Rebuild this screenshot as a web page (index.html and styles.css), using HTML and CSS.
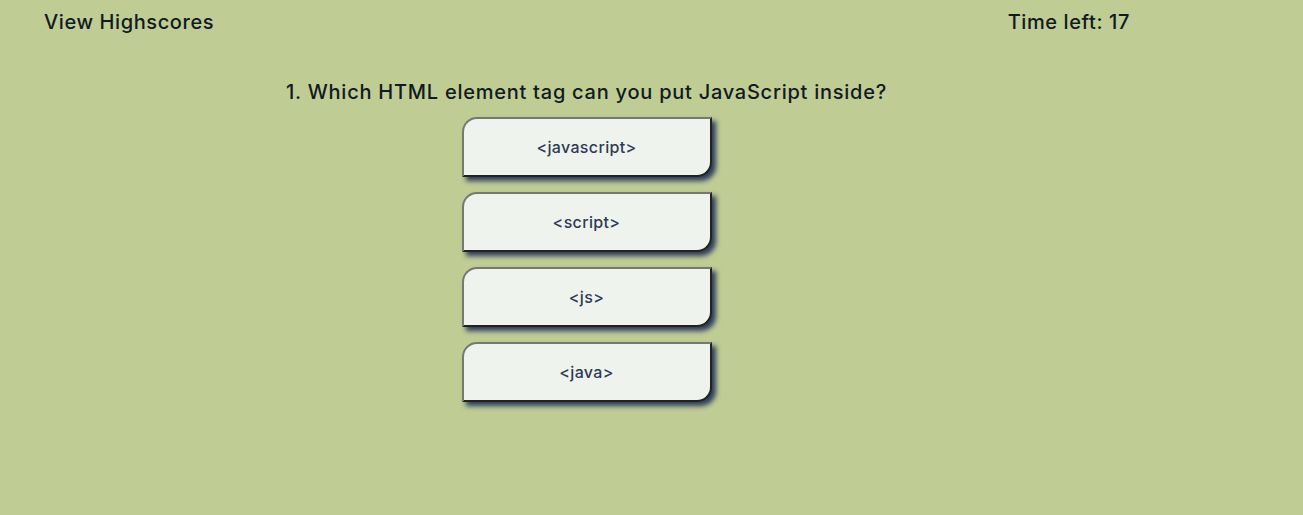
FILE: index.html
```html
<!DOCTYPE html>
<html>
<head>
<meta charset="utf-8">
<link rel="stylesheet" href="styles.css">
</head>
<body>
<header class="top">
  <a class="highscores">View Highscores</a>
  <div class="timer">Time left: 17</div>
</header>
<main class="quiz">
  <h2 class="question">1. Which HTML element tag can you put JavaScript inside?</h2>
  <div class="choices">
    <button class="choice">&lt;javascript&gt;</button>
    <button class="choice">&lt;script&gt;</button>
    <button class="choice">&lt;js&gt;</button>
    <button class="choice">&lt;java&gt;</button>
  </div>
</main>
</body>
</html>
```
FILE: styles.css
```css
html, body {
  margin: 0;
  padding: 0;
  background: #bfcc94;
  font-family: "Inter", "Open Sans", sans-serif;
  color: #111a22;
  height: 100%;
}
.top {
  display: flex;
  justify-content: space-between;
  align-items: center;
  padding: 9px 173px 0 44px;
  height: 26px;
  font-size: 20px;
  font-weight: 500;
  letter-spacing: 0.6px;
}
.quiz {
  display: flex;
  flex-direction: column;
  align-items: center;
  padding-right: 130px;
}
.question {
  margin: 43px 0 0 0;
  font-size: 20px;
  font-weight: 500;
  letter-spacing: 0.75px;
  line-height: 28px;
}
.choices {
  display: flex;
  flex-direction: column;
  gap: 15px;
  margin-top: 11px;
}
.choice {
  width: 250px;
  height: 60px;
  background: #eff3ee;
  border: 2px solid #777;
  border-bottom-color: #222;
  border-right-color: #222;
  border-radius: 15px 0 15px 0;
  box-shadow: 4px 4px 5px #2e3d5a;
  font-family: "Inter", "Open Sans", sans-serif;
  font-size: 16px;
  font-weight: 500;
  color: #2e3a55;
  letter-spacing: 0.35px;
  cursor: pointer;
}
```
